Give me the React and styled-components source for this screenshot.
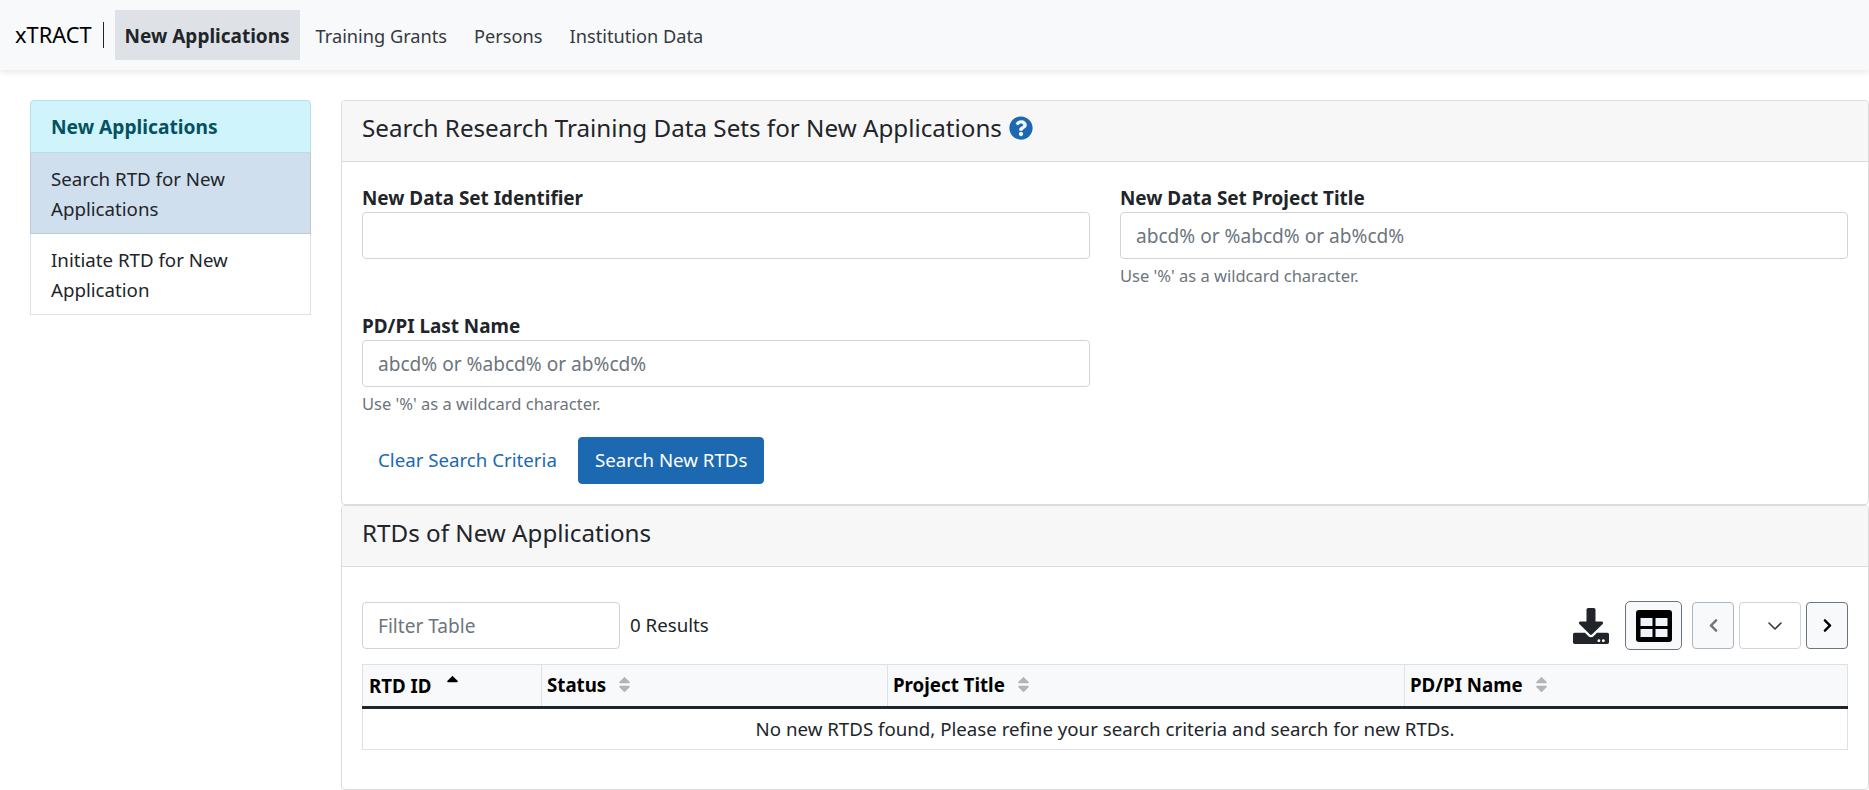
import React from "react";
import styled, { createGlobalStyle } from "styled-components";
import { FaDownload, FaQuestionCircle, FaSort, FaSortUp, FaChevronLeft, FaChevronRight } from "react-icons/fa";

const GlobalStyle = createGlobalStyle`
    * { box-sizing: border-box; }
    html, body { margin: 0; padding: 0; background: #fff; }
    body {
        font-family: "Noto Sans", "Open Sans", sans-serif;
        font-size: 18.7px;
        line-height: 1.5;
        color: #212529;
        overflow: hidden;
    }
`;

function App() {
    return (
        <>
            <GlobalStyle />
            <Navbar>
                <Brand>xTRACT</Brand>
                <NavItem $active>New Applications</NavItem>
                <NavItem>Training Grants</NavItem>
                <NavItem>Persons</NavItem>
                <NavItem>Institution Data</NavItem>
            </Navbar>
            <Page>
                <Sidebar>
                    <SideHeader>New Applications</SideHeader>
                    <SideItem $active>Search RTD for New Applications</SideItem>
                    <SideItem>Initiate RTD for New Application</SideItem>
                </Sidebar>
                <Main>
                    <Card>
                        <CardHeader>
                            Search Research Training Data Sets for New Applications
                            <HelpIcon><FaQuestionCircle /></HelpIcon>
                        </CardHeader>
                        <FormBody>
                            <FormGrid>
                                <Field>
                                    <Label>New Data Set Identifier</Label>
                                    <Input />
                                </Field>
                                <Field>
                                    <Label>New Data Set Project Title</Label>
                                    <Input placeholder="abcd% or %abcd% or ab%cd%" />
                                    <Hint>Use '%' as a wildcard character.</Hint>
                                </Field>
                                <Field>
                                    <Label>PD/PI Last Name</Label>
                                    <Input placeholder="abcd% or %abcd% or ab%cd%" />
                                    <Hint>Use '%' as a wildcard character.</Hint>
                                </Field>
                            </FormGrid>
                            <Actions>
                                <LinkButton>Clear Search Criteria</LinkButton>
                                <PrimaryButton>Search New RTDs</PrimaryButton>
                            </Actions>
                        </FormBody>
                    </Card>
                    <Card>
                        <CardHeader>RTDs of New Applications</CardHeader>
                        <TableBody>
                            <Toolbar>
                                <FilterInput placeholder="Filter Table" />
                                <ResultCount>0 Results</ResultCount>
                                <ToolbarRight>
                                    <DownloadIcon><FaDownload /></DownloadIcon>
                                    <TableToggle>
                                        <svg width="36" height="32" viewBox="0 0 36 32">
                                            <rect width="36" height="32" rx="3" fill="#000" />
                                            <rect x="4.5" y="8" width="12" height="8" fill="#eef4fa" />
                                            <rect x="19.5" y="8" width="12" height="8" fill="#eef4fa" />
                                            <rect x="4.5" y="19" width="12" height="8" fill="#eef4fa" />
                                            <rect x="19.5" y="19" width="12" height="8" fill="#eef4fa" />
                                        </svg>
                                    </TableToggle>
                                    <PagerButton $tone="#6c757d"><FaChevronLeft /></PagerButton>
                                    <PageSelect>
                                        <svg width="14" height="8" viewBox="0 0 14 8" fill="none">
                                            <path d="M1 1l6 6 6-6" stroke="#343a40" strokeWidth="1.6" strokeLinecap="round" strokeLinejoin="round" />
                                        </svg>
                                    </PageSelect>
                                    <PagerButton $tone="#000" $strong><FaChevronRight /></PagerButton>
                                </ToolbarRight>
                            </Toolbar>
                            <Table>
                                <colgroup>
                                    <col style={{ width: 179 }} />
                                    <col style={{ width: 346 }} />
                                    <col style={{ width: 517 }} />
                                    <col />
                                </colgroup>
                                <thead>
                                    <tr>
                                        <Th>RTD ID<SortUpMark><FaSortUp /></SortUpMark></Th>
                                        <Th>Status<SortMark><FaSort /></SortMark></Th>
                                        <Th>Project Title<SortMark><FaSort /></SortMark></Th>
                                        <Th>PD/PI Name<SortMark><FaSort /></SortMark></Th>
                                    </tr>
                                </thead>
                                <tbody>
                                    <tr>
                                        <EmptyCell colSpan={4}>
                                            No new RTDS found, Please refine your search criteria and search for new RTDs.
                                        </EmptyCell>
                                    </tr>
                                </tbody>
                            </Table>
                        </TableBody>
                    </Card>
                </Main>
            </Page>
        </>
    );
}

const Navbar = styled.nav`
    display: flex;
    align-items: center;
    height: 70px;
    padding-left: 15px;
    background: #f8f9fa;
    box-shadow: 0 2px 6px rgba(0, 0, 0, 0.1);
`;

const Brand = styled.div`
    font-size: 21.8px;
    color: #000;
    padding-right: 11px;
    margin-right: 11px;
    line-height: 26px;
    border-right: 1px solid #212529;
`;

const NavItem = styled.div`
    height: 50px;
    line-height: 52px;
    padding: 0 10px;
    margin-right: ${(p) => (p.$active ? "6px" : "7px")};
    background: ${(p) => (p.$active ? "#dee2e6" : "transparent")};
    font-size: ${(p) => (p.$active ? "19px" : "18.2px")};
    font-weight: ${(p) => (p.$active ? 700 : 400)};
    color: ${(p) => (p.$active ? "#212529" : "#343a40")};
`;

const Page = styled.div`
    display: grid;
    grid-template-columns: 281px 1fr;
    gap: 30px;
    padding: 30px 0 0 30px;
`;

const Sidebar = styled.div`
    align-self: start;
`;

const SideHeader = styled.div`
    height: 53px;
    line-height: 51px;
    padding: 0 20px;
    font-size: 19.2px;
    font-weight: 700;
    color: #055160;
    background: #cff4fc;
    border: 1px solid #b6dfe8;
    border-radius: 4px 4px 0 0;
`;

const SideItem = styled.div`
    padding: 11px 20px 0;
    height: 81px;
    line-height: 30px;
    background: ${(p) => (p.$active ? "#d0dfee" : "#fff")};
    border: 1px solid ${(p) => (p.$active ? "#bbc9d8" : "#dfe2e6")};
    border-top: 0;
    color: #212529;
`;

const Main = styled.div`
    display: flex;
    flex-direction: column;
`;

const Card = styled.section`
    background: #fff;
    border: 1px solid #dcdcdc;
    border-radius: 4px;
    overflow: hidden;
`;

const CardHeader = styled.h2`
    display: flex;
    align-items: center;
    height: 61px;
    margin: 0;
    padding: 0 20px 6px;
    font-size: 24.2px;
    font-weight: 400;
    background: #f7f7f7;
    border-bottom: 1px solid #dcdcdc;
`;

const HelpIcon = styled.span`
    display: inline-flex;
    margin-left: 7px;
    font-size: 24px;
    color: #1c69b2;
`;

const FormBody = styled.div`
    padding: 22px 20px 20px;
`;

const FormGrid = styled.div`
    display: grid;
    grid-template-columns: 728px 728px;
    column-gap: 30px;
    row-gap: 12px;
`;

const Field = styled.div`
    display: flex;
    flex-direction: column;
    min-height: 116px;
`;

const Label = styled.label`
    font-weight: 700;
    font-size: 18.9px;
    line-height: 28px;
`;

const Input = styled.input`
    display: block;
    width: 100%;
    height: 47px;
    padding: 0 15px;
    font: inherit;
    font-size: 19.1px;
    color: #212529;
    background: #fff;
    border: 1px solid #ced4da;
    border-radius: 4px;
    &::placeholder { color: #6c757d; opacity: 1; }
`;

const Hint = styled.small`
    font-size: 16.5px;
    line-height: 24px;
    margin-top: 5px;
    color: #6c757d;
`;

const Actions = styled.div`
    display: flex;
    align-items: center;
    gap: 5px;
    margin-top: 9px;
`;

const LinkButton = styled.button`
    height: 47px;
    padding: 0 16px;
    font: inherit;
    color: #1c69b2;
    background: none;
    border: 0;
`;

const PrimaryButton = styled.button`
    height: 47px;
    padding: 0 16px;
    font: inherit;
    color: #fff;
    background: #1c69b2;
    border: 1px solid #1c69b2;
    border-radius: 4px;
`;

const TableBody = styled.div`
    padding: 34px 20px 39px;
`;

const Toolbar = styled.div`
    display: flex;
    align-items: center;
    margin-bottom: 14px;
`;

const FilterInput = styled(Input)`
    width: 258px;
`;

const ResultCount = styled.span`
    margin-left: 10px;
`;

const ToolbarRight = styled.div`
    display: flex;
    align-items: center;
    margin-left: auto;
`;

const DownloadIcon = styled.span`
    display: inline-flex;
    font-size: 36px;
    color: #212529;
    margin-right: 16px;
`;

const TableToggle = styled.button`
    display: flex;
    align-items: center;
    justify-content: center;
    width: 57px;
    height: 49px;
    padding: 0;
    margin-right: 10px;
    background: #f8f9fa;
    border: 1px solid #6c757d;
    border-radius: 5px;
`;

const PagerButton = styled.button`
    display: flex;
    align-items: center;
    justify-content: center;
    width: 42px;
    height: 47px;
    padding: 0;
    font-size: 15px;
    color: ${(p) => p.$tone};
    background: #f8f9fa;
    border: 1px solid ${(p) => (p.$strong ? "#6c757d" : "#adb5bd")};
    border-radius: 4px;
`;

const PageSelect = styled.div`
    display: flex;
    align-items: center;
    justify-content: flex-end;
    width: 62px;
    height: 47px;
    margin: 0 5px;
    padding-right: 18px;
    background: #fff;
    border: 1px solid #ced4da;
    border-radius: 4px;
`;

const Table = styled.table`
    width: 100%;
    table-layout: fixed;
    border-collapse: collapse;
    border: 1px solid #dee2e6;
`;

const Th = styled.th`
    height: 43px;
    padding: 2px 5px 0;
    text-align: left;
    font-weight: 700;
    font-size: 18.7px;
    color: #000;
    background: #f8f9fa;
    border-left: 1px solid #dee2e6;
    border-bottom: 3px solid #212529;
    &:first-child { padding-left: 6px; }
`;

const SortMark = styled.span`
    margin-left: 9px;
    font-size: 19px;
    color: #b5b5b5;
    vertical-align: -2px;
`;

const SortUpMark = styled(SortMark)`
    margin-left: 11px;
    color: #000;
    vertical-align: 0;
`;

const EmptyCell = styled.td`
    height: 42px;
    padding: 0;
    text-align: center;
    border-top: 0;
`;

export default App;
